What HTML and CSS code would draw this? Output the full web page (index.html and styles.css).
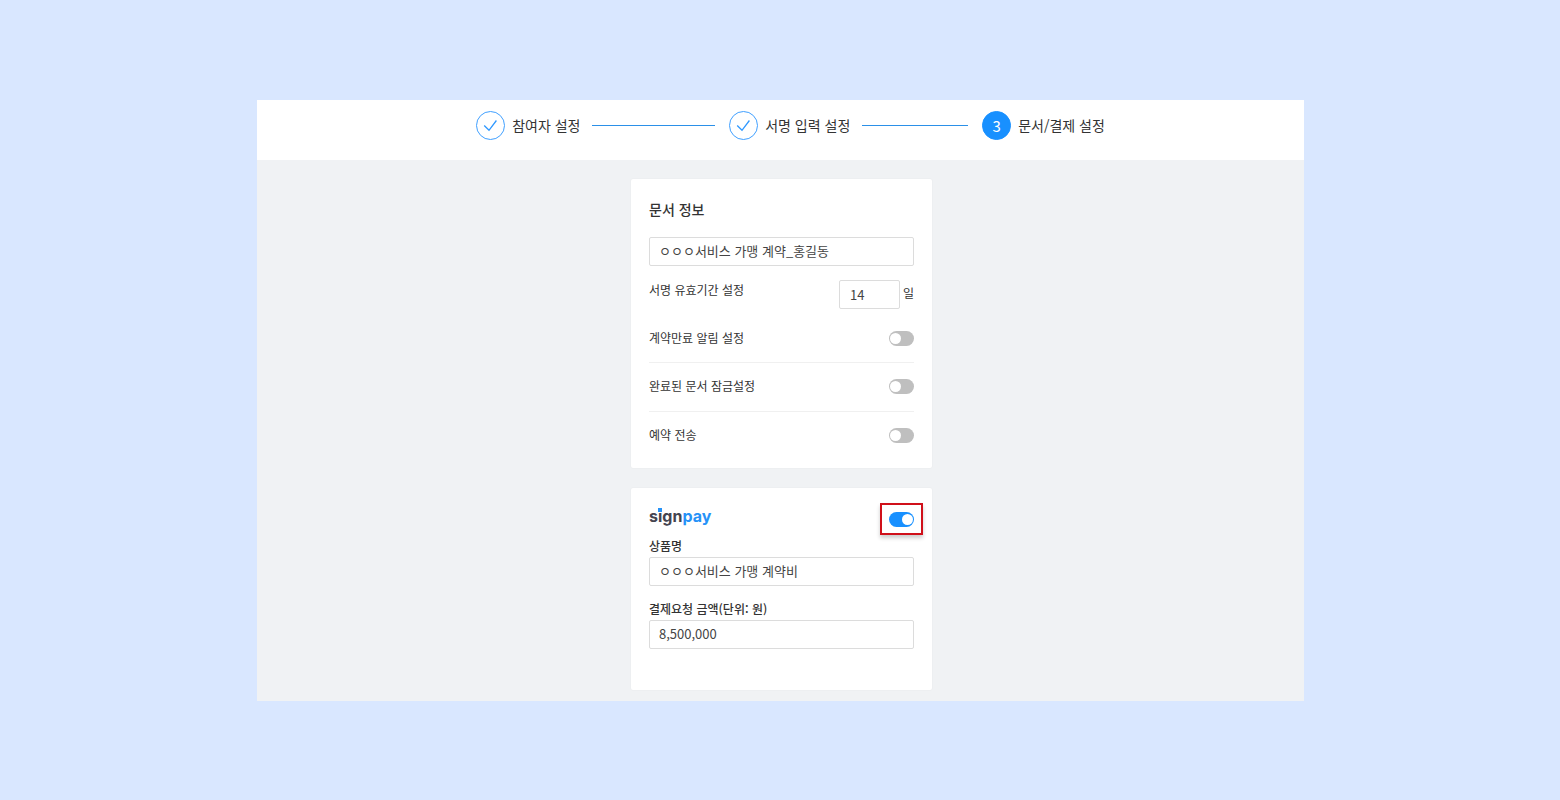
FILE: index.html
```html
<!DOCTYPE html>
<html lang="ko">
<head>
<meta charset="utf-8">
<meta name="viewport" content="width=device-width, initial-scale=1">
<title>문서/결제 설정</title>
<link rel="stylesheet" href="styles.css">
</head>
<body>
<div class="frame">
  <header class="topbar">
    <ol class="steps">
      <li class="step">
        <span class="step-mark"><svg class="check" viewBox="0 0 15 13" aria-hidden="true"><path d="M1.2 6.5 L6 11.3 L13.4 1.5"/></svg></span>
        <span class="step-label">참여자 설정</span>
        <span class="step-line"></span>
      </li>
      <li class="step">
        <span class="step-mark"><svg class="check" viewBox="0 0 15 13" aria-hidden="true"><path d="M1.2 6.5 L6 11.3 L13.4 1.5"/></svg></span>
        <span class="step-label">서명 입력 설정</span>
        <span class="step-line"></span>
      </li>
      <li class="step" aria-current="step">
        <span class="step-mark step-mark-active">3</span>
        <span class="step-label">문서/결제 설정</span>
      </li>
    </ol>
  </header>
  <main class="content">
    <section class="card">
      <h1 class="card-title">문서 정보</h1>
      <input class="field" type="text" aria-label="문서 제목" value="ㅇㅇㅇ서비스 가맹 계약_홍길동">
      <div class="period">
        <label class="label" for="days">서명 유효기간 설정</label>
        <span class="period-value"><input class="field field-days" id="days" type="text" value="14"><span class="unit">일</span></span>
      </div>
      <div class="options">
        <div class="option">
          <label class="label" for="expiry">계약만료 알림 설정</label>
          <input class="toggle" id="expiry" type="checkbox">
        </div>
        <div class="option">
          <label class="label" for="lock">완료된 문서 잠금설정</label>
          <input class="toggle" id="lock" type="checkbox">
        </div>
        <div class="option">
          <label class="label" for="reserve">예약 전송</label>
          <input class="toggle" id="reserve" type="checkbox">
        </div>
      </div>
    </section>
    <section class="card card-pay">
      <div class="pay-head">
        <label class="logo" for="signpay">s<span class="logo-i">i</span>gn<span class="logo-pay">pay</span></label>
        <span class="highlight"><input class="toggle" id="signpay" type="checkbox" checked></span>
      </div>
      <div class="group">
        <label class="label label-strong" for="product">상품명</label>
        <input class="field" id="product" type="text" value="ㅇㅇㅇ서비스 가맹 계약비">
      </div>
      <div class="group">
        <label class="label label-strong" for="amount">결제요청 금액(단위: 원)</label>
        <input class="field" id="amount" type="text" value="8,500,000">
      </div>
    </section>
  </main>
</div>
</body>
</html>
```

FILE: styles.css
```css
* {
  box-sizing: border-box;
}

body {
  margin: 0;
  padding: 100px 256px 99px 257px;
  background: #d9e7ff;
  color: #333;
  font-family: "Noto Sans CJK KR", sans-serif;
  font-size: 12px;
  line-height: 20px;
}

.frame {
  background: #f0f2f4;
}

.topbar {
  padding: 11px 0 20px 20px;
  background: #fff;
}

.steps {
  display: grid;
  grid-template-columns: 253px 253px auto;
  justify-content: center;
  margin: 0;
  padding: 0;
  list-style: none;
}

.step {
  display: flex;
  align-items: center;
  white-space: nowrap;
}

.step-mark {
  display: flex;
  align-items: center;
  justify-content: center;
  width: 29px;
  height: 29px;
  border: 1px solid #40a0ff;
  border-radius: 50%;
  font-size: 15px;
}

.step-mark-active {
  border-color: #1890ff;
  background: #1890ff;
  color: #fff;
}

.check {
  width: 15px;
  height: 13px;
  fill: none;
  stroke: #2f98ff;
  stroke-width: 1.3;
}

.step-label {
  margin-left: 7px;
  padding-bottom: 2px;
  font-size: 14px;
}

.step-line {
  flex: 1;
  height: 1px;
  margin: 0 14px 0 12px;
  background: #2b90e8;
}

.content {
  display: flex;
  flex-direction: column;
  align-items: center;
  gap: 20px;
  padding: 19px 0 11px 2px;
}

.card {
  width: 301px;
  padding: 20px 18px 8px;
  border-radius: 2px;
  background: #fff;
  box-shadow: 0 0 2px rgba(0, 0, 0, 0.06);
}

.card-title {
  margin: 0 0 18px;
  font-size: 14px;
  font-weight: 500;
  line-height: 20px;
}

.field {
  display: block;
  width: 100%;
  height: 29px;
  padding: 0 9px 2px;
  border: 1px solid #dcdcdc;
  border-radius: 2px;
  background: #fff;
  color: #444;
  font-family: inherit;
  font-size: 13px;
}

.field-days {
  width: 61px;
  padding: 0 10px;
}

.period {
  display: flex;
  justify-content: space-between;
  margin: 14px 0 5px;
}

.period-value {
  display: flex;
  gap: 3px;
}

.unit {
  padding-top: 3px;
}

.option {
  display: flex;
  align-items: center;
  justify-content: space-between;
  height: 49px;
  border-bottom: 1px solid #f0f0f0;
}

.option:last-child {
  height: 48px;
  border-bottom: 0;
}

.option + .option {
  padding-bottom: 2px;
}

.toggle {
  position: relative;
  width: 25px;
  height: 15px;
  margin: 0;
  border-radius: 8px;
  background: #bfbfbf;
  appearance: none;
}

.toggle::before {
  content: "";
  position: absolute;
  top: 2px;
  left: 1px;
  width: 11px;
  height: 11px;
  border-radius: 50%;
  background: #fff;
}

.toggle:checked {
  background: #1890ff;
}

.toggle:checked::before {
  right: 1px;
  left: auto;
}

.card-pay {
  padding: 16px 18px 41px;
}

.pay-head {
  display: flex;
  align-items: center;
  justify-content: space-between;
  height: 31px;
  margin-bottom: 1px;
}

.logo {
  padding-bottom: 8px;
  color: #44444f;
  font-family: Inter, sans-serif;
  font-size: 16px;
  font-weight: 700;
}

.logo-i {
  position: relative;
}

/* Blue dot of the wordmark's "i" */
.logo-i::before {
  content: "";
  position: absolute;
  top: 2px;
  left: 0;
  width: 4px;
  height: 4px;
  background: #2692f8;
}

.logo-pay {
  color: #2692f8;
}

/* Call-out frame that surrounds the payment switch */
.highlight {
  position: relative;
  display: flex;
}

.highlight::after {
  content: "";
  position: absolute;
  inset: -9px -9px -8px;
  border: 2px solid #d0101a;
  box-shadow: 0 3px 4px rgba(0, 0, 0, 0.2);
  pointer-events: none;
}

.group + .group {
  margin-top: 13px;
}

.group .label {
  display: block;
  padding-bottom: 1px;
}

.label-strong {
  font-weight: 500;
}
```
